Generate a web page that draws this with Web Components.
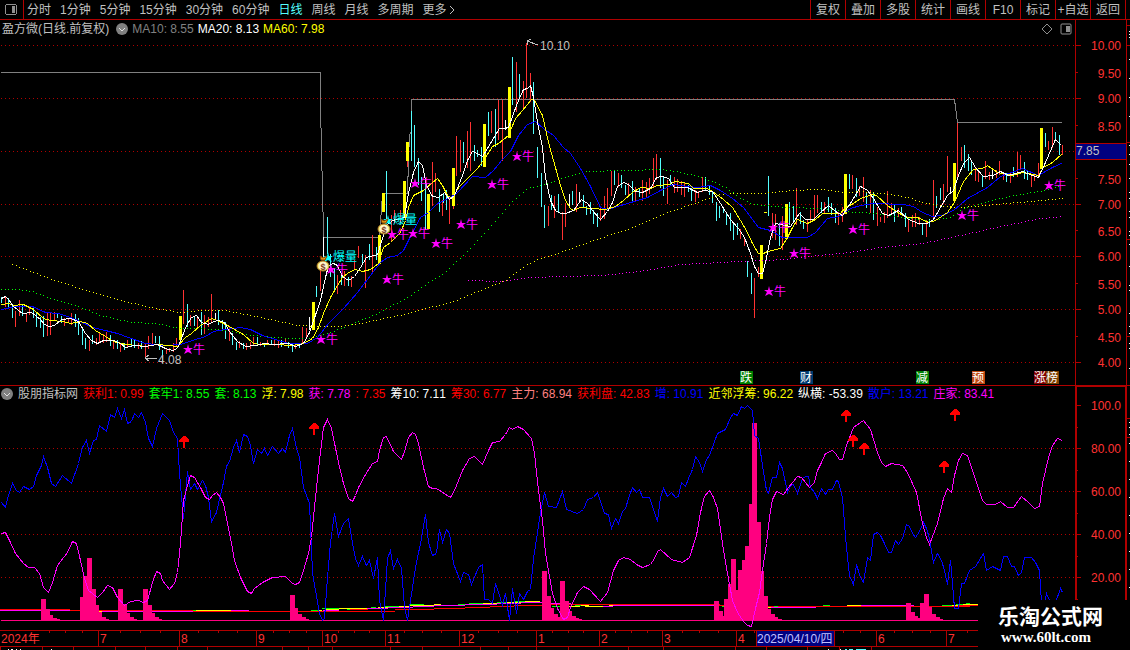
<!DOCTYPE html>
<html lang="zh-CN">
<head>
<meta charset="utf-8">
<title>盈方微 日线</title>
<style>
  :root {
    --line: #b00000;
    --axis-text: #ff3232;
    --text: #c0c0c0;
    --up: #ff3232;
    --down: #54ffff;
  }

  body {
    margin: 0;
    background: #000;
    color: var(--text);
    font: 12px/16px "Liberation Sans", "Noto Sans CJK SC", sans-serif;
    font-kerning: none;
    overflow: hidden;
  }
</style>
</head>
<body>
<stock-app></stock-app>

<script>
const PERIODS = ["分时", "1分钟", "5分钟", "15分钟", "30分钟", "60分钟", "日线", "周线", "月线", "多周期", "更多"];
const ACTIONS = ["复权", "叠加", "多股", "统计", "画线", "F10", "标记", "+自选", "返回"];

// text, label y, tick y
const PRICE_LABELS = [
  ["10.00", 45, 45], ["9.50", 73, 72], ["9.00", 98, 98], ["8.50", 126, 125], ["7.50", 179, 178], ["7.00", 204, 204],
  ["6.50", 231, 230], ["6.00", 256, 256], ["5.50", 284, 283], ["5.00", 309, 309], ["4.50", 337, 336], ["4.00", 362, 362]
];

const FLOW_LABELS = [["100.0", 405], ["80.00", 448], ["60.00", 491], ["40.00", 534], ["20.00", 577]];

const LEGEND = [
  ["获利1: 0.99", "#ff0000"], ["套牢1: 8.55", "#00ff00"], ["套: 8.13", "#00ff00"], ["浮: 7.98", "#ffff00"],
  ["获: 7.78", "#ff00ff"], [": 7.35", "#ff0000"], ["筹10: 7.11", "#ffffff"], ["筹30: 6.77", "#ff0000"],
  ["主力: 68.94", "#ff8080"], ["获利盘: 42.83", "#ff0000"], ["增: 10.91", "#0000ff"],
  ["近邻浮筹: 96.22", "#ffff00"], ["纵横: -53.39", "#ffffff"], ["散户: 13.21", "#0000ff"], ["庄家: 83.41", "#ff00ff"]
];

// bars: x, high, low
const FALLING = `1 297 303,8 298 309,12 305 318,22 305 316,33 307 318,36 313 327,40 317 328,43 316 337,57 313 318,61 316 323,
75 314 327,78 318 335,82 327 345,85 338 349,92 335 344,110 335 346,117 340 349,124 343 350,131 338 347,134 340 348,141 341 349,
155 336 343,159 336 350,162 350 363,187 304 327,194 317 326,201 312 335,218 310 325,222 320 329,225 322 339,232 333 345,
236 342 350,243 343 349,257 337 345,264 343 347,271 340 345,281 340 347,288 342 348,292 343 352,299 343 348,316 286 297,
327 217 254,330 254 277,334 268 292,341 273 285,348 277 286,362 254 263,369 244 260,376 247 260,386 171 220,411 111 161,
414 125 167,418 158 185,421 177 201,425 183 230,439 189 212,443 193 203,446 190 210,463 142 163,474 145 161,477 150 157,
481 147 166,488 112 136,495 109 147,512 57 105,519 74 98,533 82 134,537 147 178,541 173 207,544 205 228,551 195 210,
558 194 212,572 191 205,583 195 207,586 206 215,590 202 214,593 210 224,597 213 227,614 171 185,621 175 188,625 185 195,
632 181 201,639 189 197,660 158 188,663 177 196,670 175 185,688 185 192,691 188 201,705 177 190,709 185 195,712 192 203,
716 202 221,719 206 218,723 207 213,726 213 225,730 213 231,733 223 240,737 223 235,747 261 277,751 273 294,768 176 216,
779 223 246,789 202 225,793 206 223,800 212 224,803 220 229,821 202 213,828 197 212,831 203 215,835 208 223,849 174 189,
856 178 197,866 192 208,873 193 220,894 205 222,901 207 213,905 213 227,922 223 235,929 219 227,936 196 208,940 188 200,
964 145 168,968 154 171,971 160 175,982 175 187,1006 173 182,1013 167 177,1024 162 179,1027 170 180,1045 133 147,1055 132 140,1059 135 155`;

const RISING = `5 297 307,15 311 327,19 300 316,26 313 322,29 308 315,47 313 336,50 313 335,54 312 321,64 318 326,68 318 323,
71 313 325,89 340 351,96 338 345,99 333 342,103 334 343,106 332 342,113 340 349,120 343 352,127 340 347,138 343 349,145 343 358,
148 336 349,152 333 344,166 348 354,169 348 352,173 343 352,176 338 347,183 290 324,190 315 326,197 318 329,204 315 334,
208 317 327,211 294 322,229 327 341,239 341 348,246 343 350,250 342 349,253 337 346,260 342 346,267 340 345,274 340 346,
278 340 348,281 342 346,285 338 343,295 343 349,302 327 343,306 328 337,320 265 291,337 275 294,344 271 286,351 276 287,
354 260 270,358 246 258,365 255 288,372 235 272,391 215 242,394 210 223,400 210 223,407 160 167,432 162 206,435 173 192,
442 200 216,449 198 224,453 205 209,456 136 176,460 140 172,467 131 168,470 122 171,491 111 133,498 100 140,502 100 161,
516 62 112,523 81 108,526 43 98,530 73 102,548 206 226,554 196 218,562 212 240,565 203 227,576 184 212,600 208 221,
604 196 219,607 188 211,611 171 196,618 173 187,628 183 195,635 187 201,642 180 201,646 182 197,649 178 194,653 158 188,
656 154 180,667 180 204,674 177 193,677 179 192,681 181 195,684 182 197,695 190 202,698 191 198,702 177 192,740 229 239,
744 237 246,754 278 318,758 267 277,772 213 238,775 214 240,782 216 250,796 188 225,807 220 232,810 210 222,814 195 218,
817 195 213,824 202 213,838 212 225,842 207 222,852 175 189,859 186 196,863 177 202,870 190 213,877 207 226,880 217 222,
884 212 223,887 191 218,891 203 213,898 208 217,908 220 232,912 215 227,915 213 227,919 217 225,926 220 237,933 180 218,
943 184 204,947 156 192,957 123 177,961 147 161,975 167 181,978 170 182,985 161 179,989 172 180,996 170 178,999 161 175,
1003 173 180,1010 172 183,1017 152 177,1020 155 170,1031 175 187,1034 173 181,1038 163 177,1048 141 150,1052 127 148,1062 145 155`;

const FLAT = `215 313 320,309 317 330,323 237 260,505 120 130,569 194 206,579 192 202,950 187 193,992 170 179`;

const SURGE = `179 316 340,312 302 330,378 235 264,382 193 212,403 181 218,406 142 161,427 194 229,452 168 206,
483 124 167,508 87 138,760 245 279,785 204 239,844 174 214,953 163 201,1040 128 169`;

const PRICE_LINES = [
  ["#808080", "0,72 320,72 320,99 321,155 322,185 323,237 379,237 382,193 407,193 408,160 409,135 411,130 411,99 954,99 957,122 1061,122"],
  ["#0000ff", `1,309 15,306 32,306 45,312 58,313 70,317 80,321 92,327 105,330 117,333 128,337 145,343 165,345 180,344 192,340
    205,336 213,331 225,329 240,327 250,329 262,335 275,339 288,343 307,343 317,337 328,323 343,308 357,292 370,275 380,262
    387,257 397,255 403,250 412,232 420,217 428,212 437,203 450,197 457,192 472,176 485,177 493,170 502,159 510,151 518,135
    527,124 535,121 543,128 553,135 563,147 570,153 580,168 590,186 600,207 607,209 627,203 647,197 660,190 673,184 687,186
    697,187 710,185 720,190 732,198 743,207 758,227 770,230 782,237 807,237 815,232 827,218 838,216 850,208 860,205 873,203
    903,204 913,206 922,212 932,216 942,215 953,210 967,198 987,187 1000,176 1022,168 1038,175 1052,167 1061,163`],
  ["#ffff00", `1,304 8,303 13,305 23,304 33,309 43,318 50,320 63,321 70,323 80,321 87,323 95,330 105,336 113,341 125,344 137,345
    145,346 157,344 177,346 185,337 191,333 200,325 211,318 217,320 227,325 243,334 253,343 260,344 275,344 292,345 303,343
    312,338 318,327 323,313 330,297 337,285 342,277 348,272 355,269 362,271 370,269 378,263 383,247 390,242 400,232 405,220
    408,207 413,195 423,190 432,182 437,178 442,185 447,195 452,198 458,187 467,178 477,168 485,157 492,146 498,143 508,135
    515,118 522,110 531,99 534,100 542,115 548,142 553,160 560,185 565,200 570,208 573,210 580,207 592,208 605,209 615,206
    623,200 632,192 640,187 650,188 657,185 668,184 675,181 688,183 693,188 707,188 712,191 723,199 732,207 740,220 746,230
    752,243 758,253 763,253 767,251 780,248 787,237 792,227 797,219 807,223 815,219 822,213 840,213 845,207 853,203 860,198
    872,194 876,195 887,205 897,212 907,217 917,217 928,222 935,220 947,212 954,202 963,181 973,169 982,168 987,165 997,172
    1012,175 1022,172 1038,175 1043,167 1052,162 1062,153`],
  ["#ffffff", `1,298 5,296 8,299 13,306 22,313 31,312 40,319 44,324 49,326 54,325 61,319 70,318 78,321 85,333 91,340 97,343
    103,340 113,340 120,343 125,347 134,345 145,346 157,344 165,348 172,350 177,348 181,338 186,325 191,317 196,315 201,322
    208,324 213,321 218,320 224,322 229,331 237,341 245,346 255,345 264,343 272,344 288,343 295,346 303,343 309,332 320,300
    325,277 328,265 333,263 337,265 342,276 348,280 354,276 360,267 366,257 377,254 382,238 386,225 392,220 404,217 408,193
    413,172 418,161 422,165 426,185 432,196 438,197 444,192 449,199 454,195 462,175 467,160 472,151 477,153 482,156 487,148
    493,138 499,128 504,128 508,127 513,113 518,100 523,89 527,88 530,85 533,97 538,127 542,147 545,177 550,200 555,210
    560,213 565,213 573,210 581,199 587,203 592,210 600,219 607,211 612,202 617,186 623,182 628,184 635,191 642,192 650,188
    656,177 662,176 668,178 674,187 687,187 697,192 703,190 712,191 720,203 730,219 738,228 744,237 750,253 754,266 758,273
    762,273 765,262 770,237 775,223 780,224 790,226 799,213 805,219 813,219 820,212 828,205 835,211 842,215 847,207 850,203
    860,186 867,190 873,198 882,213 888,215 898,210 908,219 918,223 927,223 933,219 940,207 947,195 953,190 958,175 963,163
    969,157 975,167 983,176 993,175 1000,171 1008,175 1022,171 1032,175 1038,177 1045,162 1051,148 1055,139 1061,145`]
];

const DOTTED_LINES = [
  ["#00ff00", `1,289 15,289 32,291 50,298 75,305 100,315 130,322 155,323 180,328 200,328 225,330 250,335 290,338 310,338
    330,332 353,323 377,313 407,297 427,283 443,273 463,255 480,237 500,215 513,200 527,188 547,183 570,175 587,171 660,169
    680,172 693,175 713,181 727,188 740,198 753,204 787,207 820,208 843,211 860,212 883,214 907,218 930,220 950,217 963,208
    983,202 1013,195 1040,191 1062,185`],
  ["#ffff00", `12,264 30,271 60,282 100,294 140,305 178,312 200,310 225,310 250,315 297,325 320,326 340,326 360,323 383,318
    403,314 430,307 453,301 480,290 505,280 525,265 540,258 560,252 593,240 630,228 665,213 700,201 720,194 735,193 763,193
    790,190 820,189 845,192 860,191 890,194 907,197 923,202 937,205 955,207 973,206 1007,203 1062,198`],
  ["#ff00ff", `468,280 500,281 530,277 562,276 600,275 640,271 680,264 720,262 760,260 785,259 815,255 842,253 880,247 923,243
    960,235 1000,226 1040,218 1062,216`]
];

const BULLS = [
  [188, 349], [321, 339], [331, 269], [387, 279], [392, 234], [413, 233], [415, 183], [436, 243], [461, 224], [492, 184],
  [517, 156], [773, 227], [794, 253], [769, 291], [853, 229], [962, 215], [1049, 185]
];

const BADGES = [
  ["跌", 740, "#008000"], ["财", 800, "#003a70"], ["减", 916, "#008000"], ["预", 972, "#c04810"], ["涨", 1034, "#800000"], ["榜", 1046, "#804000"]
];

// x, width, top
const VOLUME = `41 5 599,46 4 609,50 3 615,53 4 618,57 3 619,80 4 597,83 4 576,87 5 558,92 4 589,95 4 605,99 3 612,102 4 617,
106 3 619,118 5 589,123 4 604,127 3 613,130 4 617,134 3 619,143 5 589,148 4 605,151 4 613,155 4 617,159 3 619,290 5 595,295 3 608,
298 4 614,302 4 617,305 4 619,542 5 571,547 4 596,551 3 608,554 4 614,558 3 617,560 5 581,565 4 601,568 4 611,572 4 616,576 3 618,
579 3 619,714 5 601,719 4 611,723 2 616,724 4 599,728 4 584,731 5 559,736 3 590,738 4 570,742 3 560,745 4 546,749 3 504,752 5 423,
757 4 522,761 3 571,764 4 596,768 3 609,771 4 614,775 3 617,778 4 619,906 5 603,911 4 612,915 3 616,918 2 618,920 4 603,924 5 594,
929 3 607,932 4 614,936 4 617,940 3 619`;

const RETAIL = `1,502 5,507 8,495 12,483 16,490 19,492 23,486 29,489 33,486 36,475 41,465 43,456 47,467 51,483 55,486 62,475
71,483 78,463 82,447 86,440 89,453 93,440 96,439 99,425 106,431 110,414 114,417 117,408 121,418 124,409 127,423 131,421 134,413
138,417 141,412 145,422 148,438 152,446 156,428 162,413 169,420 173,432 177,438 179,473 183,518 187,471 190,489 194,483 197,489
202,480 205,485 208,497 211,521 216,512 218,503 223,482 226,466 229,461 233,447 236,440 239,452 243,434 247,436 250,445 253,463
257,449 261,453 264,448 267,455 272,446 278,453 282,448 285,452 289,435 292,428 296,448 299,457 303,487 306,495 309,503 312,572
315,590 319,613 322,620 324,618 327,577 330,542 334,513 338,536 343,523 348,518 352,543 355,558 358,565 362,556 366,565 369,560
373,578 377,557 379,600 383,620 387,558 390,550 393,568 397,559 401,568 404,607 407,620 415,567 421,538 425,514 428,542 432,555
436,553 439,529 442,542 446,529 449,533 453,563 460,581 463,572 468,574 471,584 478,567 482,564 484,599 488,599 492,603 495,583
499,595 502,605 505,593 509,620 512,588 516,613 519,593 523,599 527,591 530,589 533,558 537,532 540,512 544,492 548,506 556,507
562,491 566,509 577,513 583,509 587,499 593,497 597,492 604,513 608,514 611,528 615,518 618,523 622,511 625,508 629,495 632,487
636,492 639,489 642,497 649,497 657,521 660,497 663,488 667,496 671,492 675,497 678,496 681,482 685,486 688,478 692,469 695,456
699,462 702,471 706,459 709,455 717,433 725,429 730,417 733,413 737,415 741,406 744,408 747,405 752,410 754,435 758,438 762,465
766,490 768,493 772,477 776,477 779,462 782,468 787,492 790,485 793,484 797,493 802,478 805,476 808,476 810,487 814,492 817,498
821,488 825,494 828,489 832,489 836,480 838,481 842,497 844,523 846,547 849,575 853,584 856,564 860,577 863,582 867,557 870,560
873,534 877,532 880,535 884,543 888,552 891,552 895,540 898,544 902,538 906,524 909,526 912,533 915,537 919,531 923,522 926,528
929,538 933,562 937,553 941,560 944,570 947,584 950,560 952,583 954,608 958,608 961,583 964,583 969,570 975,566 983,553 986,570
992,566 1000,570 1003,556 1007,556 1011,566 1014,566 1018,575 1021,572 1024,557 1031,557 1035,562 1039,570 1041,602 1044,602
1046,593 1049,600 1055,602 1060,588 1062,592`;

const MAKER = `1,533 5,532 10,542 15,553 19,558 23,563 28,567 34,567 39,573 43,587 48,592 52,582 57,565 67,552 72,541 76,543
80,560 84,578 88,590 97,597 102,592 107,585 112,587 117,597 124,605 130,601 138,600 143,602 147,600 152,582 156,571 160,573
162,580 169,589 174,583 177,572 180,543 183,500 187,485 190,475 194,477 200,487 205,497 209,499 212,495 216,492 220,497 223,503
227,523 231,543 234,560 240,577 247,591 251,593 254,588 262,582 272,577 285,576 292,583 295,584 299,582 303,570 308,553 311,537
315,497 319,460 323,427 327,419 331,428 338,462 343,483 348,498 352,501 355,495 358,487 365,474 372,463 377,461 379,450 383,437
386,436 393,451 401,459 404,451 408,437 412,432 415,434 418,443 423,467 428,486 432,488 436,488 450,497 454,490 462,470 469,458
474,456 482,464 488,450 492,442 499,441 505,434 509,427 512,429 517,426 523,429 531,438 534,453 538,490 542,520 545,553 552,593
557,608 563,619 567,617 570,607 577,592 583,586 589,589 600,601 607,592 613,570 618,560 623,557 630,559 636,564 642,567 650,564
654,558 657,551 660,549 671,559 682,562 689,557 696,535 700,512 704,496 709,490 713,497 717,508 722,543 727,573 732,600 737,612
743,621 747,625 751,626 755,608 759,592 762,570 766,543 769,517 772,499 776,491 783,494 788,487 797,476 801,477 809,487 814,482
817,470 821,462 825,453 832,450 835,453 839,459 842,459 846,445 853,427 863,420 870,429 877,452 881,462 885,466 891,463 902,465
907,472 916,492 922,523 926,537 929,544 937,523 943,498 947,488 951,492 954,475 958,460 962,453 967,455 973,473 982,500 986,504
995,504 1000,501 1007,507 1013,507 1021,496 1028,502 1034,508 1039,506 1042,483 1048,457 1052,445 1057,438 1062,440`;

// cost lines near the base: colour, x1, x2, y
const COSTS = [
  ["#f00", 0, 70, 609], ["#f0f", 0, 70, 610], ["#f00", 70, 193, 610], ["#ff0", 98, 102, 611], ["#f0f", 102, 193, 611],
  ["#0f0", 193, 196, 610], ["#ff0", 196, 231, 610], ["#f0f", 231, 249, 610], ["#f00", 193, 395, 611], ["#0f0", 311, 318, 610],
  ["#ff0", 319, 322, 610], ["#0f0", 322, 339, 608], ["#ff0", 325, 339, 609], ["#f0f", 323, 339, 610], ["#ff0", 339, 367, 608],
  ["#0f0", 347, 350, 609], ["#f00", 350, 368, 609], ["#f0f", 367, 388, 608], ["#0f0", 371, 376, 607], ["#ff0", 378, 388, 607],
  ["#0f0", 385, 400, 606], ["#ff0", 399, 410, 606], ["#f0f", 388, 413, 607], ["#f00", 395, 434, 609], ["#0f0", 410, 424, 604],
  ["#ff0", 410, 434, 605], ["#f0f", 413, 434, 606], ["#ff0", 434, 441, 604], ["#f0f", 434, 465, 605], ["#f00", 434, 465, 608],
  ["#0f0", 458, 465, 604], ["#0f0", 469, 484, 603], ["#f0f", 465, 497, 604], ["#f00", 465, 490, 607], ["#ff0", 483, 499, 603],
  ["#0f0", 497, 506, 602], ["#ff0", 507, 521, 602], ["#f0f", 497, 521, 603], ["#f00", 490, 514, 606], ["#0f0", 515, 525, 601],
  ["#ff0", 525, 540, 601], ["#f0f", 521, 542, 602], ["#f00", 514, 542, 605], ["#f0f", 550, 571, 603], ["#f00", 551, 720, 604],
  ["#0f0", 552, 560, 606], ["#ff0", 568, 580, 606], ["#0f0", 575, 582, 605], ["#ff0", 581, 589, 605], ["#ff0", 585, 603, 606],
  ["#f0f", 603, 613, 606], ["#ff0", 609, 613, 605], ["#f0f", 613, 714, 605], ["#f00", 714, 724, 605], ["#0f0", 722, 725, 606],
  ["#f00", 768, 970, 606], ["#f0f", 768, 816, 607], ["#0f0", 774, 778, 606], ["#ff0", 768, 771, 607], ["#0f0", 823, 830, 605],
  ["#ff0", 847, 861, 605], ["#f0f", 861, 914, 605], ["#0f0", 942, 952, 605], ["#ff0", 952, 962, 605], ["#0f0", 956, 963, 604],
  ["#0f0", 966, 970, 603], ["#ff0", 963, 978, 604], ["#f00", 958, 978, 605]
];

const ARROWS = [[184, 436], [314, 423], [846, 410], [853, 435], [864, 443], [944, 461], [955, 409]];

const MONTHS = [
  ["7", 98], ["8", 179], ["9", 256], ["10", 322], ["11", 385], ["12", 459], ["1", 536], ["2", 599], ["3", 662], ["4", 736], ["6", 876], ["7", 946]
];
const WEEK_TICKS = [49, 65, 82, 120, 140, 160, 198, 218, 237, 273, 289, 306, 338, 354, 369, 404, 422, 441, 478, 498, 517, 552, 568,
  583, 615, 631, 647, 682, 699, 718, 754, 843, 860, 894, 912, 930, 967];
const LOWER_TICKS = [0, 42, 73, 115, 145, 177, 207, 282, 308, 332, 390, 422, 480, 508, 536, 568, 628, 663, 735, 766, 807, 839, 871];

// distance between two trading days
const DAY = 3.5;

const split = data => data.split(",").map(item => item.trim().split(" ").map(Number));
const bars = (data, width, fill) => split(data)
  .map(([x, top, bottom]) => `<rect x="${x}" y="${top}" width="${width}" height="${bottom - top}" fill="${fill}"/>`).join("");
const polyline = (color, points) => `<polyline points="${points}" fill="none" stroke="${color}"/>`;
const star = (x, y, fill) => `<path transform="translate(${x} ${y})" fill="${fill}" d="M0-5L1-1H5L2 1L4 5L0 3L-4 5L-2 1L-5-1H-1Z"/>`;

function grid(rows) {
  let path = "";
  rows.forEach(y => {
    for (let x = 1; x < 1074; x += 4) path += `M${x} ${y}h1v1h-1z`;
  });
  return `<path d="${path}" fill="var(--line)"/>`;
}

// one dot per trading day along the line
function dots(color, data) {
  const points = data.trim().split(/\s+/).map(point => point.split(",").map(Number));
  let path = "";
  let i = 0;
  for (let x = points[0][0]; x <= points[points.length - 1][0]; x += DAY) {
    while (i < points.length - 2 && points[i + 1][0] < x) i++;
    const [x1, y1] = points[i];
    const [x2, y2] = points[i + 1];
    const y = y1 + (y2 - y1) * (x - x1) / (x2 - x1);
    path += `M${Math.round(x)} ${Math.round(y)}h1v1h-1z`;
  }
  return `<path d="${path}" fill="${color}"/>`;
}

class StockApp extends HTMLElement {
  connectedCallback() {
    this.attachShadow({mode: "open"});
    this.shadowRoot.innerHTML = `
    <style>
      :host {
        display: block;
        position: relative;
      }

      section {
        display: grid;
        grid-template-columns: minmax(0, 1fr) 55px;
      }

      .flow {
        border-top: 1px solid var(--line);
      }

      .title {
        margin-right: 3px;
      }

      site-mark {
        position: absolute;
        right: 0;
        bottom: 0;
      }
    </style>
    <app-toolbar></app-toolbar>
    <main>
      <section>
        <div>
          <chart-legend tools>
            <span class="title">盈方微(日线.前复权)</span>
            <fold-button></fold-button>
            <span style="color:#808080">MA10: 8.55</span>
            <span style="color:#fff">MA20: 8.13</span>
            <span style="color:#ff0">MA60: 7.98</span>
          </chart-legend>
          <price-chart></price-chart>
        </div>
        <price-axis></price-axis>
      </section>
      <section class="flow">
        <div>
          <chart-legend class="low">
            <fold-button></fold-button>
            <span>股朋指标网</span>
            ${LEGEND.map(([text, color]) => `<span style="color:${color}">${text}</span>`).join("")}
          </chart-legend>
          <flow-chart></flow-chart>
          <time-axis></time-axis>
        </div>
        <flow-axis></flow-axis>
      </section>
    </main>
    <site-mark></site-mark>
    `;
  }
}

class AppToolbar extends HTMLElement {
  connectedCallback() {
    this.attachShadow({mode: "open"});
    this.render();
    this.shadowRoot.querySelector(".periods").addEventListener("click", event => this.handleClick(event));
  }

  handleClick(event) {
    const button = event.target.closest("button");
    if (!button) return;
    this.shadowRoot.querySelectorAll(".periods button").forEach(item =>
      item.setAttribute("aria-pressed", item === button)
    );
  }

  render() {
    this.shadowRoot.innerHTML = `
    <style>
      :host {
        display: flex;
        box-sizing: border-box;
        height: 20px;
        border-bottom: 1px solid var(--line);
      }

      button {
        background: none;
        border: 0;
        padding: 0;
        color: var(--text);
        font: inherit;
        white-space: nowrap;
        cursor: pointer;
      }

      .side {
        width: 24px;
        border-right: 1px solid var(--line);
      }

      svg {
        display: block;
        margin-left: 5px;
      }

      .periods {
        display: flex;
        flex: 1;
        align-items: center;
        gap: 9px;
        padding-left: 3px;
      }

      .periods button[aria-pressed="true"] {
        color: var(--down);
      }

      .periods svg {
        margin: 0 0 0 -7px;
      }

      .actions {
        display: flex;
        margin-right: 4px;
        border-right: 1px solid var(--line);
      }

      .actions button {
        width: 35px;
        border-left: 1px solid var(--line);
      }
    </style>
    <button class="side" aria-label="侧栏">
      <svg width="12" height="11" viewBox="0 0 12 11" shape-rendering="crispEdges">
        <path d="M1 0H11V1H12V10H11V11H1V10H0V1H1ZM1 1V10H11V1Z" fill="#909090" fill-rule="evenodd"/>
        <path d="M7 2H10V9H7Z" fill="#909090"/>
      </svg>
    </button>
    <div class="periods">
      ${PERIODS.map(name => `<button aria-pressed="${name === "日线"}">${name}</button>`).join("")}
      <svg width="6" height="10" viewBox="0 0 6 10"><path d="M1 1L5 5L1 9" fill="none" stroke="#c0c0c0"/></svg>
    </div>
    <div class="actions">
      ${ACTIONS.map(name => `<button>${name}</button>`).join("")}
    </div>
    `;
  }
}

class FoldButton extends HTMLElement {
  connectedCallback() {
    this.attachShadow({mode: "open"});
    this.shadowRoot.innerHTML = `
    <style>
      :host {
        display: flex;
      }

      button {
        display: flex;
        padding: 0;
        border: 0;
        background: none;
        cursor: pointer;
      }
    </style>
    <button aria-label="展开">
      <svg width="12" height="12" viewBox="0 0 12 12">
        <circle cx="6" cy="6" r="6" fill="#808080"/>
        <path d="M3 5L6 8L9 5" fill="none" stroke="#e0e0e0"/>
      </svg>
    </button>
    `;
  }
}

class ChartLegend extends HTMLElement {
  connectedCallback() {
    this.attachShadow({mode: "open"});
    this.shadowRoot.innerHTML = `
    <style>
      :host {
        display: flex;
        align-items: center;
        gap: 4px;
        box-sizing: border-box;
        height: 19px;
        padding: 0 0 1px 2px;
        white-space: nowrap;
      }

      :host(.low) {
        height: 17px;
        gap: 5px;
        padding-left: 1px;
      }

      svg {
        margin: 0 3px 0 auto;
      }
    </style>
    <slot></slot>
    ${this.hasAttribute("tools") ? `
    <svg width="30" height="12" viewBox="0 0 30 12">
      <path d="M5 1L10 6L5 11L0 6Z" fill="none" stroke="#909090"/>
      <rect x="19" y="1" width="10" height="10" rx="1" fill="none" stroke="#909090"/>
      <path d="M24 3H28V9H24Z" fill="#909090"/>
    </svg>` : ""}
    `;
  }
}

class PriceChart extends HTMLElement {
  connectedCallback() {
    this.attachShadow({mode: "open"});
    this.render();
  }

  bag(x, y) {
    return `
    <g transform="translate(${x} ${y})">
      <path d="M-3-8L0-6L4-8L2-4H-2Z" fill="#f0a010" stroke="#804000"/>
      <ellipse cx="0" cy="2" rx="6" ry="5" fill="#f8f080" stroke="#b07820"/>
      <circle cx="0" cy="2" r="4" fill="#fff4d0"/>
      <text x="0" y="6" font-size="9" font-weight="bold" text-anchor="middle" fill="#804020">$</text>
    </g>`;
  }

  render() {
    this.shadowRoot.innerHTML = `
    <style>
      :host {
        display: block;
      }

      svg {
        display: block;
        width: 100%;
        overflow: visible;
      }
    </style>
    <svg viewBox="0 39 1075 346">
      <g shape-rendering="crispEdges">
        ${grid([45, 98, 151, 204, 256, 309, 362])}
        <g transform="translate(.5 .5)">${polyline(...PRICE_LINES[0])}</g>
        ${bars(RISING, 1, "var(--up)")}
        ${bars(FALLING, 1, "var(--down)")}
        ${bars(FLAT, 1, "#fff")}
        ${bars(SURGE, 3, "#ff0")}
        <rect x="764" y="212" width="3" height="1" fill="#ff0"/>
        ${DOTTED_LINES.map(([color, points]) => dots(color, points)).join("")}
        <g transform="translate(.5 .5)">
          ${PRICE_LINES.slice(1).map(([color, points]) => polyline(color, points)).join("")}
        </g>
      </g>
      ${BULLS.map(([x, y]) => `${star(x, y, "#f0f")}<text x="${x + 5}" y="${y + 5}" fill="#f0f">牛</text>`).join("")}
      ${[[328, 257], [388, 220]].map(([x, y]) => `
        ${star(x, y, "#0ff")}<text x="${x + 5}" y="${y + 4}" fill="#0ff">爆量</text>`).join("")}
      ${this.bag(323, 264)}
      ${this.bag(384, 227)}
      <g fill="none" stroke="#c0c0c0" shape-rendering="crispEdges">
        <path d="M527 41L538 45M527 41L531 39M527 41L528 45"/>
        <path d="M145 358H157M145 358L149 355M145 358L149 361"/>
      </g>
      <text x="540" y="50" fill="#c0c0c0">10.10</text>
      <text x="158" y="364" fill="#c0c0c0">4.08</text>
      ${BADGES.map(([text, x, fill]) => `
        <rect x="${x}" y="371" width="13" height="13" fill="${fill}"/><text x="${x}" y="382" fill="#fff">${text}</text>`).join("")}
    </svg>
    `;
  }
}

class PriceAxis extends HTMLElement {
  connectedCallback() {
    this.attachShadow({mode: "open"});
    this.shadowRoot.innerHTML = `
    <style>
      :host {
        display: flex;
      }

      svg {
        width: 100%;
      }
    </style>
    <svg viewBox="1075 20 55 365" preserveAspectRatio="none" shape-rendering="crispEdges">
      <path d="M1075 20h1v365h-1zM1126 20h1v365h-1z" fill="var(--line)"/>
      ${PRICE_LABELS.map(([text, y, tick]) => `
        <rect x="1076" y="${tick}" width="${text.endsWith("50") ? 2 : 5}" height="1" fill="var(--line)"/>
        <text x="1121" y="${y + 5}" text-anchor="end" fill="var(--axis-text)">${text}</text>`).join("")}
      <rect x="1076" y="143" width="50" height="17" fill="var(--line)"/>
      <rect x="1076" y="144" width="50" height="15" fill="#000080"/>
      <text x="1076" y="155" fill="#c0c0c0">7.85</text>
      ${[25, 45, 142, 239, 336].map(y => `<rect x="1127" y="${y}" width="3" height="1" fill="var(--line)"/>`).join("")}
      ${[31, 34, 37, 59, 78, 97, 116, 145, 154, 164, 178, 192, 198, 211, 217, 231, 235, 244, 266, 285, 290, 313, 326, 333, 343, 348, 368]
        .map(y => `<rect x="1129" y="${y}" width="1" height="1" fill="#fff"/>`).join("")}
    </svg>
    `;
  }
}

class FlowChart extends HTMLElement {
  connectedCallback() {
    this.attachShadow({mode: "open"});
    this.shadowRoot.innerHTML = `
    <style>
      :host {
        display: block;
      }

      svg {
        display: block;
        width: 100%;
      }
    </style>
    <svg viewBox="0 403 1075 226" shape-rendering="crispEdges">
      ${grid([448, 491, 534, 577])}
      ${COSTS.map(([fill, x1, x2, y]) => `<rect x="${x1}" y="${y}" width="${x2 - x1}" height="1" fill="${fill}"/>`).join("")}
      <rect x="1" y="620" width="1061" height="1" fill="#ff0080"/>
      ${split(VOLUME).map(([x, width, top]) => `<rect x="${x}" y="${top}" width="${width}" height="${621 - top}" fill="#ff0080"/>`).join("")}
      <g transform="translate(.5 .5)">
        ${polyline("#0000ff", RETAIL)}
        ${polyline("#ff00ff", MAKER)}
      </g>
      ${ARROWS.map(([x, y]) => `<path transform="translate(${x} ${y})" d="M-1 0H1L5 4V6H1V12H-1V6H-5V4Z" fill="#f00"/>`).join("")}
    </svg>
    `;
  }
}

class FlowAxis extends HTMLElement {
  connectedCallback() {
    this.attachShadow({mode: "open"});
    this.shadowRoot.innerHTML = `
    <style>
      :host {
        display: flex;
      }

      svg {
        width: 100%;
      }
    </style>
    <svg viewBox="1075 386 55 264" preserveAspectRatio="none" shape-rendering="crispEdges">
      <path d="M1075 386h52v1h-50v263h-2zM1125 386h2v264h-2z" fill="var(--line)"/>
      ${FLOW_LABELS.map(([text, y]) => `
        <rect x="1077" y="${y}" width="4" height="1" fill="var(--line)"/>
        <rect x="1077" y="${y + 22}" width="1" height="1" fill="var(--line)"/>
        <text x="1121" y="${y + 5}" text-anchor="end" fill="var(--axis-text)">${text}</text>`).join("")}
      ${[418, 437].map(y => `<rect x="1127" y="${y}" width="3" height="1" fill="var(--line)"/>`).join("")}
      ${[422, 427, 434, 443, 461, 479, 497, 515, 533, 551, 569, 587].map(y => `<rect x="1129" y="${y}" width="1" height="1" fill="#fff"/>`).join("")}
    </svg>
    `;
  }
}

class TimeAxis extends HTMLElement {
  connectedCallback() {
    this.attachShadow({mode: "open"});
    this.shadowRoot.innerHTML = `
    <style>
      :host {
        display: block;
      }

      svg {
        display: block;
        width: 100%;
      }
    </style>
    <svg viewBox="0 629 1075 21" shape-rendering="crispEdges">
      <path d="M0 630h1075v1h-1075zM0 646h1075v1h-1075z" fill="var(--line)"/>
      ${WEEK_TICKS.map(x => `<rect x="${x}" y="631" width="1" height="2" fill="var(--line)"/>`).join("")}
      ${LOWER_TICKS.map(x => `<rect x="${x}" y="647" width="1" height="3" fill="var(--line)"/>`).join("")}
      <text x="1" y="643" fill="var(--axis-text)">2024年</text>
      ${MONTHS.map(([text, x]) => `
        <rect x="${x}" y="631" width="1" height="15" fill="var(--line)"/>
        <text x="${x + 2}" y="643" fill="var(--axis-text)">${text}</text>`).join("")}
      <rect x="756" y="631" width="79" height="15" fill="var(--line)"/>
      <rect x="757" y="631" width="77" height="15" fill="#000080"/>
      <text x="757" y="643" fill="#c0c0ff">2025/04/10/四</text>
      <path d="M8 649h1v1h-1zM11 649h2v1h-2zM16 649h1v1h-1zM20 649h1v1h-1zM51 649h1v1h-1zM828 649h1v1h-1zM840 649h1v1h-1z" fill="#fff"/>
      <path d="M845 649h2v1h-2zM849 649h4v1h-4zM856 649h10v1h-10z" fill="var(--down)"/>
    </svg>
    `;
  }
}

class SiteMark extends HTMLElement {
  connectedCallback() {
    this.attachShadow({mode: "open"});
    this.shadowRoot.innerHTML = `
    <style>
      :host {
        display: grid;
        align-content: center;
        box-sizing: border-box;
        width: 152px;
        height: 50px;
        padding: 2px 0 0 20px;
        background: #000;
        color: #fff;
      }

      strong {
        font-size: 21px;
        line-height: 22px;
      }

      a {
        padding-left: 3px;
        color: #fff;
        font: bold 15px/18px "Liberation Serif", serif;
        text-decoration: none;
      }
    </style>
    <strong>乐淘公式网</strong>
    <a href="#">www.60lt.com</a>
    `;
  }
}

customElements.define("app-toolbar", AppToolbar);
customElements.define("fold-button", FoldButton);
customElements.define("chart-legend", ChartLegend);
customElements.define("price-chart", PriceChart);
customElements.define("price-axis", PriceAxis);
customElements.define("flow-chart", FlowChart);
customElements.define("flow-axis", FlowAxis);
customElements.define("time-axis", TimeAxis);
customElements.define("site-mark", SiteMark);
customElements.define("stock-app", StockApp);
</script>
</body>
</html>
